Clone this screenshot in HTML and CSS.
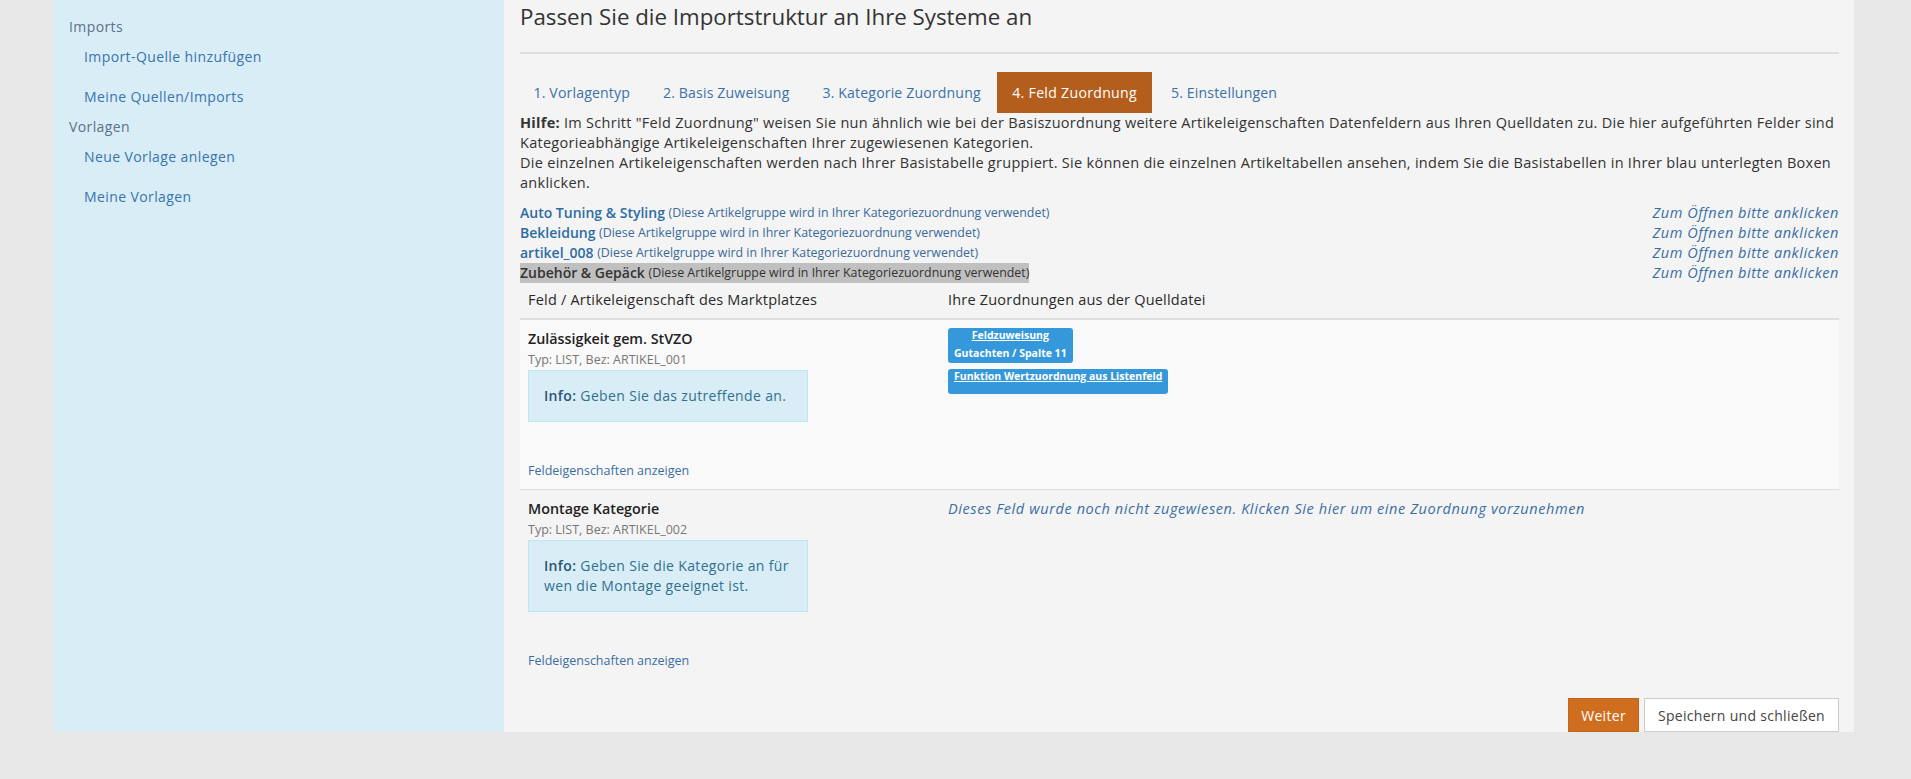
FILE: index.html
```html
<!DOCTYPE html>
<html lang="de">
<head>
<meta charset="utf-8">
<title>Importstruktur</title>
<link rel="stylesheet" href="styles.css">
</head>
<body>
<div class="page">
  <aside class="sidebar">
    <div class="nav-head">Imports</div>
    <a class="nav-link" href="#">Import-Quelle hinzufügen</a>
    <a class="nav-link" href="#">Meine Quellen/Imports</a>
    <div class="nav-head">Vorlagen</div>
    <a class="nav-link" href="#">Neue Vorlage anlegen</a>
    <a class="nav-link" href="#">Meine Vorlagen</a>
  </aside>
  <main class="main">
    <h1 class="title">Passen Sie die Importstruktur an Ihre Systeme an</h1>
    <hr class="divider">
    <nav class="tabs">
      <a class="tab" href="#">1. Vorlagentyp</a>
      <a class="tab" href="#">2. Basis Zuweisung</a>
      <a class="tab" href="#">3. Kategorie Zuordnung</a>
      <a class="tab active" href="#">4. Feld Zuordnung</a>
      <a class="tab" href="#">5. Einstellungen</a>
    </nav>
    <div class="help">
      <p><b>Hilfe:</b> Im Schritt "Feld Zuordnung" weisen Sie nun ähnlich wie bei der Basiszuordnung weitere Artikeleigenschaften Datenfeldern aus Ihren Quelldaten zu. Die hier aufgeführten Felder sind Kategorieabhängige Artikeleigenschaften Ihrer zugewiesenen Kategorien.</p>
      <p>Die einzelnen Artikeleigenschaften werden nach Ihrer Basistabelle gruppiert. Sie können die einzelnen Artikeltabellen ansehen, indem Sie die Basistabellen in Ihrer blau unterlegten Boxen anklicken.</p>
    </div>
    <div class="groups">
      <div class="group"><span class="gname"><b>Auto Tuning &amp; Styling</b> <small>(Diese Artikelgruppe wird in Ihrer Kategoriezuordnung verwendet)</small></span><i class="open">Zum Öffnen bitte anklicken</i></div>
      <div class="group"><span class="gname"><b>Bekleidung</b> <small>(Diese Artikelgruppe wird in Ihrer Kategoriezuordnung verwendet)</small></span><i class="open">Zum Öffnen bitte anklicken</i></div>
      <div class="group"><span class="gname"><b>artikel_008</b> <small>(Diese Artikelgruppe wird in Ihrer Kategoriezuordnung verwendet)</small></span><i class="open">Zum Öffnen bitte anklicken</i></div>
      <div class="group"><span class="gname selected"><b>Zubehör &amp; Gepäck</b> <small>(Diese Artikelgruppe wird in Ihrer Kategoriezuordnung verwendet)</small></span><i class="open">Zum Öffnen bitte anklicken</i></div>
    </div>
    <div class="table">
      <div class="thead">
        <div class="c1">Feld / Artikeleigenschaft des Marktplatzes</div>
        <div class="c2">Ihre Zuordnungen aus der Quelldatei</div>
      </div>
      <div class="row odd">
        <div class="c1">
          <div class="fname">Zulässigkeit gem. StVZO</div>
          <div class="ftype">Typ: LIST, Bez: ARTIKEL_001</div>
          <div class="info"><b>Info:</b> Geben Sie das zutreffende an.</div>
          <a class="props" href="#">Feldeigenschaften anzeigen</a>
        </div>
        <div class="c2">
          <div class="assign">
            <a class="assign-link center" href="#">Feldzuweisung</a>
            <div class="assign-val">Gutachten / Spalte 11</div>
          </div>
          <div class="assign wide">
            <a class="assign-link" href="#">Funktion Wertzuordnung aus Listenfeld</a>
          </div>
        </div>
      </div>
      <div class="row">
        <div class="c1">
          <div class="fname">Montage Kategorie</div>
          <div class="ftype">Typ: LIST, Bez: ARTIKEL_002</div>
          <div class="info"><b>Info:</b> Geben Sie die Kategorie an für wen die Montage geeignet ist.</div>
          <a class="props" href="#">Feldeigenschaften anzeigen</a>
        </div>
        <div class="c2">
          <i class="unassigned">Dieses Feld wurde noch nicht zugewiesen. Klicken Sie hier um eine Zuordnung vorzunehmen</i>
        </div>
      </div>
    </div>
    <div class="actions">
      <button class="btn primary">Weiter</button>
      <button class="btn">Speichern und schließen</button>
    </div>
  </main>
</div>
</body>
</html>
```
FILE: styles.css
```css
* { box-sizing: border-box; }
body {
  margin: 0;
  background: #e8e8e8;
  font-family: "Open Sans", "Liberation Sans", sans-serif;
  font-size: 14px;
  color: #333;
}
a { text-decoration: none; }
.page {
  display: flex;
  margin-left: 54px;
  width: 1800px;
  align-items: stretch;
}
.sidebar {
  width: 450px;
  flex: none;
  background: #d9edf7;
  padding: 17px 0 0 15px;
  font-size: 14px;
  letter-spacing: 0.4px;
}
.nav-head {
  line-height: 20px;
  color: #5b7189;
}
.nav-link {
  display: block;
  line-height: 20px;
  padding: 10px 0 10px 15px;
  color: #3874ad;
}
.main {
  flex: 1;
  background: #f4f4f4;
  padding: 0 15px 0 16px;
}
.title {
  margin: 0;
  font-weight: 400;
  font-size: 22.3px;
  line-height: 34px;
  color: #333;
}
.divider {
  margin: 18px 0 0;
  border: 0;
  border-top: 2px solid #dedede;
}
.tabs {
  display: flex;
  margin-top: 18px;
  margin-left: -3px;
  height: 41px;
}
.tab {
  padding: 0 16.5px;
  line-height: 41px;
  color: #3a72a8;
  font-size: 14.1px;
  letter-spacing: 0.15px;
}
.tab.active {
  background: #b35e1d;
  color: #fff;
  padding: 0 15px;
  letter-spacing: 0.3px;
}
.tab.active + .tab { padding-left: 19px; }
.help p {
  margin: 0;
  line-height: 20px;
  color: #333;
  font-size: 14.5px;
  letter-spacing: 0.28px;
}
.groups {
  margin-top: 10px;
}
.group {
  display: flex;
  justify-content: space-between;
  height: 20px;
  line-height: 20px;
}
.gname, .open { display: block; height: 20px; }
.gname b {
  color: #2d6ca5;
  font-weight: 600;
  font-size: 14px;
  vertical-align: top;
}
.gname small {
  color: #3a6a9a;
  font-size: 12.4px;
  vertical-align: top;
}
.gname.selected {
  background: #c0c0c0;
}
.gname.selected b, .gname.selected small { color: #333; }
.open {
  color: #3a6ea3;
  font-size: 14.5px;
  letter-spacing: 0.54px;
}
.thead {
  display: flex;
  padding: 7px 0 8px;
  border-bottom: 2px solid #dedede;
  line-height: 20px;
  font-weight: 500;
  font-size: 14.5px;
  letter-spacing: 0.2px;
  color: #2a2a2a;
}
.c1 { width: 420px; padding-left: 8px; flex: none; }
.c2 { flex: 1; padding-left: 8px; }
.row {
  display: flex;
  padding: 8px 0;
  border-bottom: 1px solid #dedede;
}
.row:last-child { border-bottom: 0; }
.row.odd { background: #f9f9f9; }
.fname {
  line-height: 22px;
  font-weight: 600;
  font-size: 14.3px;
  color: #222;
}
.ftype {
  line-height: 20px;
  font-size: 12.5px;
  color: #777;
}
.info {
  width: 280px;
  background: #d9edf7;
  border: 1px solid #bce8f1;
  padding: 15px 15px;
  line-height: 20px;
  color: #31708f;
  letter-spacing: 0.35px;
}
.info b { font-weight: 600; color: #2a5574; }
.props {
  display: block;
  margin-top: 39px;
  line-height: 20px;
  font-size: 12.5px;
  color: #3a6ea3;
}
.assign {
  display: table;
  background: #3598db;
  border-radius: 3px;
  padding: 0 6px 0;
  color: #fff;
  font-size: 10.5px;
  font-weight: 700;
  margin-bottom: 6px;
}
.assign-link {
  display: block;
  color: #fff;
  text-decoration: underline;
  line-height: 15px;
}
.assign-link.center { text-align: center; }
.assign-val { line-height: 20px; }
.assign.wide { padding: 0 6px 10px; }
.unassigned {
  line-height: 20px;
  color: #3a6ea3;
  display: block;
  margin-top: 1px;
  font-size: 14.5px;
  letter-spacing: 0.6px;
}
.actions {
  display: flex;
  justify-content: flex-end;
  gap: 5px;
  margin-top: 19px;
}
.btn {
  font-family: "Open Sans", sans-serif;
  font-size: 14px;
  letter-spacing: 0.3px;
  height: 34px;
  padding: 0 13px;
  background: #fff;
  border: 1px solid #ccc;
  color: #444;
}
.btn.primary {
  background: #cf6e1f;
  border-color: #c0651c;
  color: #fff;
  padding: 0 12px;
}
```
